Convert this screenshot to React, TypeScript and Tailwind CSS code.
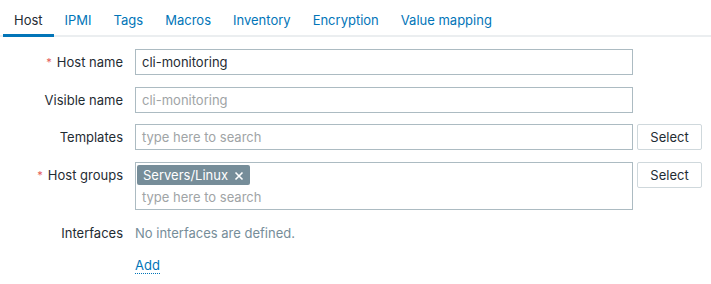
const tabs = ['Host', 'IPMI', 'Tags', 'Macros', 'Inventory', 'Encryption', 'Value mapping']

const Label = ({ text, required }: { text: string; required?: boolean }) => (
  <div className="flex w-[123px] shrink-0 items-center justify-end gap-[5px] text-[13px] text-[#1f2c33]">
    {required && <span className="text-[11px] leading-none text-[#e45959]">*</span>}
    {text}
  </div>
)

const SelectButton = () => (
  <button className="ml-[4px] h-[26px] w-[65px] shrink-0 rounded-[2px] border border-[#cfd8dc] bg-white text-[13px] text-[#1f2c33]">
    Select
  </button>
)

export default function App() {
  return (
    <div className="h-[284px] w-[711px] bg-white font-['Inter','Liberation_Sans',sans-serif] text-[13px] leading-[16px]">
      <div className="flex border-b-2 border-[#ebeef0] pl-[3px]">
        {tabs.map((t, i) => (
          <div
            key={t}
            className={
              i === 0
                ? 'mb-[-2px] border-b-[3px] border-[#0275b8] px-[11px] pb-[6px] pt-[12px] text-[#1f2c33]'
                : 'mb-[-2px] border-b-[3px] border-transparent px-[11px] pb-[6px] pt-[12px] text-[#0275b8]'
            }
          >
            {t}
          </div>
        ))}
      </div>

      <div className="mt-[12px] flex flex-col gap-[12px]">
        <div className="flex h-[26px] items-stretch gap-[12px]">
          <Label text="Host name" required />
          <div className="flex w-[498px] items-center border border-[#acbbc2] px-[6px] text-[#1f2c33]">cli-monitoring</div>
        </div>

        <div className="flex h-[26px] items-stretch gap-[12px]">
          <Label text="Visible name" />
          <div className="flex w-[498px] items-center border border-[#acbbc2] px-[6px] text-[#a0a4a6]">cli-monitoring</div>
        </div>

        <div className="mt-[-1px] flex h-[26px] items-stretch gap-[12px]">
          <Label text="Templates" />
          <div className="flex items-stretch">
            <div className="flex w-[498px] items-center border border-[#acbbc2] px-[6px] text-[#a0a4a6]">type here to search</div>
            <SelectButton />
          </div>
        </div>

        <div className="flex items-start gap-[12px]">
          <div className="flex h-[26px]">
            <Label text="Host groups" required />
          </div>
          <div className="flex items-start">
            <div className="flex h-[48px] w-[498px] flex-col border border-[#acbbc2] px-[1px] pt-[2px]">
              <div className="flex h-[20px] w-fit items-center gap-[6px] rounded-[2px] bg-[#768d99] px-[6px] text-[13px] text-white">
                Servers/Linux
                <svg width="10" height="10" viewBox="0 0 10 10" className="mt-[1px]">
                  <path d="M1.5 1.5L8.5 8.5M8.5 1.5L1.5 8.5" stroke="white" strokeWidth="1.6" />
                </svg>
              </div>
              <div className="mt-[2px] px-[5px] leading-[20px] text-[#a0a4a6]">type here to search</div>
            </div>
            <SelectButton />
          </div>
        </div>

        <div className="mt-[3px] flex h-[16px] items-center gap-[12px]">
          <Label text="Interfaces" />
          <div className="text-[#768d99]">No interfaces are defined.</div>
        </div>

        <div className="mt-[5px] flex h-[16px] items-center gap-[12px]">
          <div className="w-[123px]" />
          <span className="border-b border-dotted border-[#0275b8] leading-[15px] text-[#0275b8]">Add</span>
        </div>
      </div>
    </div>
  )
}
